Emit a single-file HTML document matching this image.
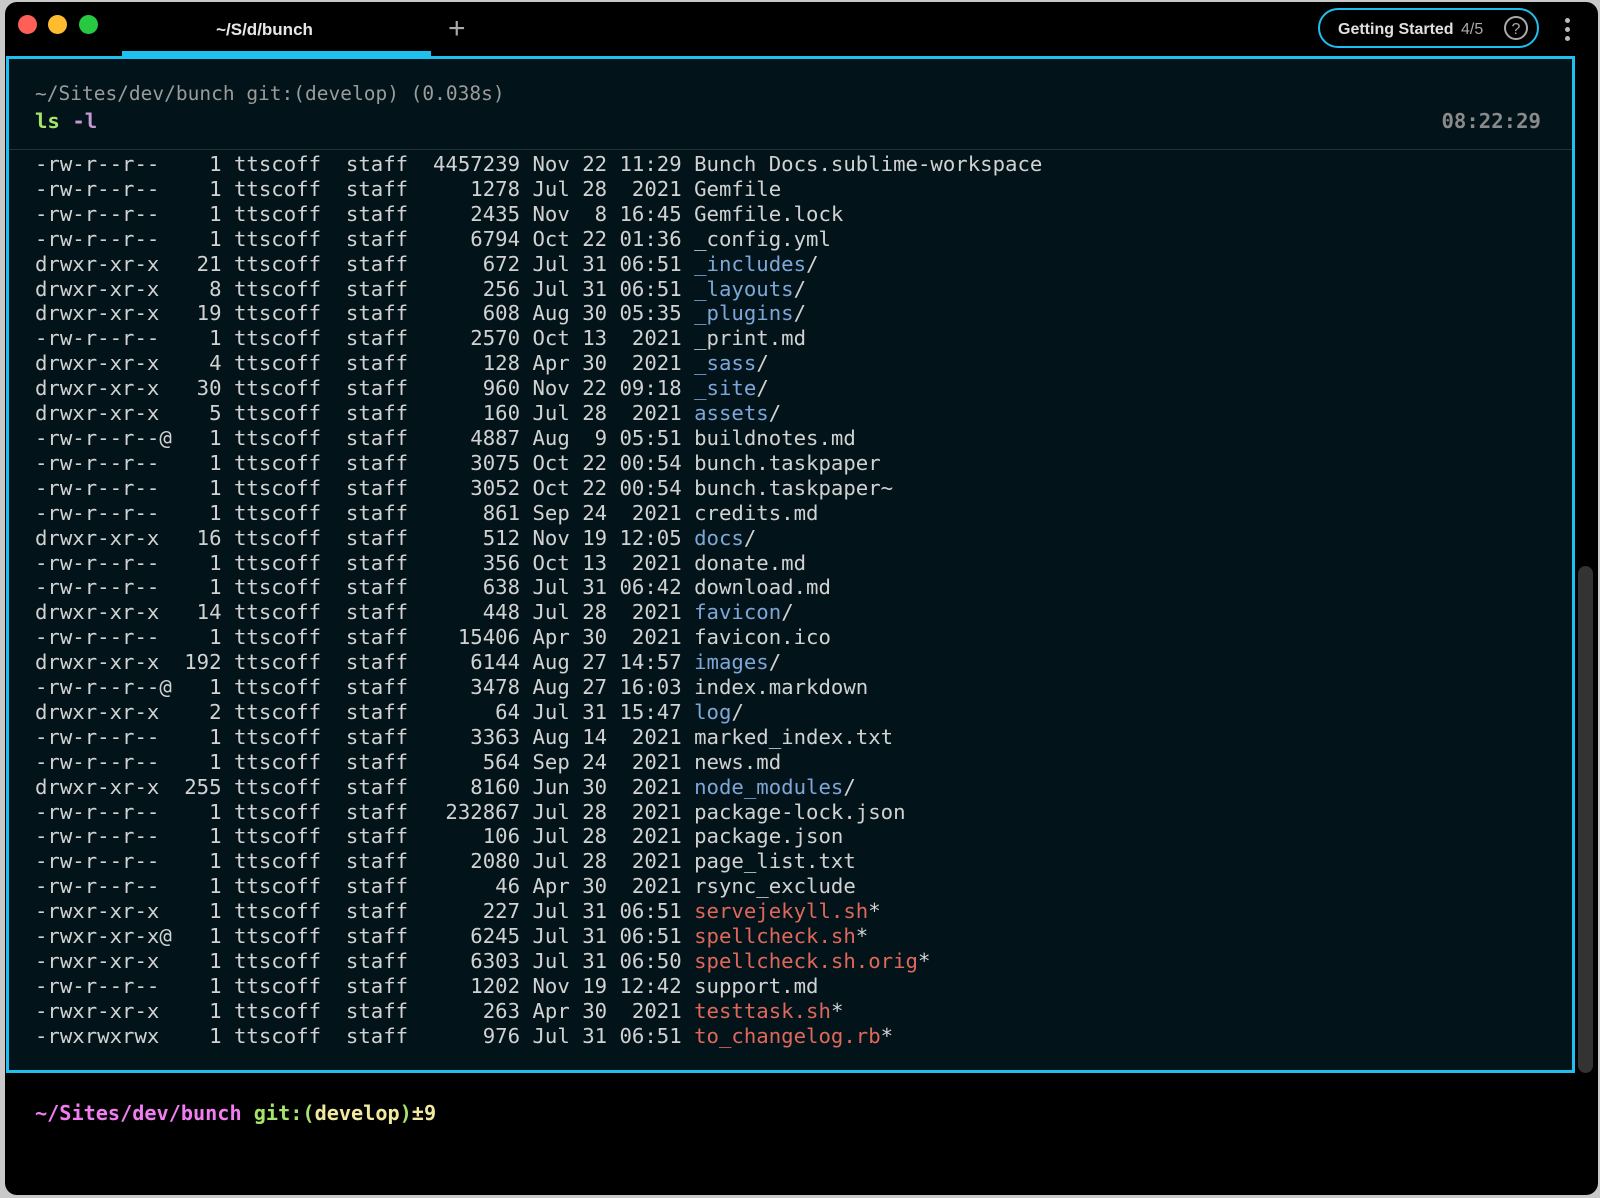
<!DOCTYPE html>
<html><head><meta charset="utf-8"><style>
html,body{margin:0;padding:0;width:1600px;height:1198px;overflow:hidden;background:#c9c9c9;}
.win{position:absolute;left:5px;top:2px;width:1593px;height:1193px;background:#000;border-radius:12px;overflow:hidden;}
.dot{position:absolute;top:13px;width:19px;height:19px;border-radius:50%;}
.tab{position:absolute;left:100px;top:0;width:319px;height:50px;color:#e8e8e8;font:bold 17px "Liberation Sans",sans-serif;text-align:center;line-height:56px;}
.tabline{position:absolute;left:117px;top:49px;width:309px;height:6px;background:#1ec0f0;}
.plus{position:absolute;left:443px;top:10px;color:#aaa;font:30px "Liberation Sans",sans-serif;}
.gs{position:absolute;left:1313px;top:6px;width:221px;height:40px;border:2px solid #1ec0f0;border-radius:21px;box-sizing:border-box;color:#e0e0e0;font:bold 16px "Liberation Sans",sans-serif;}
.gs .t{position:absolute;left:18px;top:11px;}
.gs .n{position:absolute;left:141px;top:11px;color:#aaa;font-weight:normal;}
.gs .q{position:absolute;left:184px;top:6px;width:24px;height:24px;border:2px solid #aaa;border-radius:50%;color:#aaa;text-align:center;line-height:23px;font-size:16px;font-weight:normal;box-sizing:border-box;}
.menu{position:absolute;left:1560px;top:16px;}
.menu i{display:block;width:5px;height:5px;border-radius:50%;background:#bbb;margin-bottom:4px;}
.box{position:absolute;left:1px;top:54px;width:1569px;height:1017px;border:3px solid #1ec0f0;box-sizing:border-box;background:#02141a;}
.mono{font-family:"DejaVu Sans Mono","Liberation Mono",monospace;font-size:20.66px;white-space:pre;}
.h1{position:absolute;left:26px;top:23px;color:#9b9b9b;font-size:19.5px;}
.h2{position:absolute;left:26px;top:50px;font-weight:bold;color:#a6e36a;}
.time{position:absolute;right:31px;top:50px;color:#8a8a8a;font-weight:bold;}
.sep{position:absolute;left:0;right:0;top:90px;height:1px;background:#24333a;}
.list{position:absolute;left:26px;top:93px;line-height:24.9px;color:#d2d2d2;margin:0;}
.d{color:#7ea7d8}.x{color:#e0675a}
.sb{position:absolute;left:1573px;top:564px;width:15px;height:507px;border-radius:8px;background:#333;}
.prompt{position:absolute;left:30px;top:1099px;font-weight:bold;font-size:20.2px;}
</style></head><body>
<div class="win">
<div class="dot" style="left:13px;background:#fe5f57"></div>
<div class="dot" style="left:43px;background:#febc2e"></div>
<div class="dot" style="left:74px;background:#28c840"></div>
<div class="tab">~/S/d/bunch</div>
<div class="tabline"></div>
<div class="plus">+</div>
<div class="gs"><span class="t">Getting Started</span><span class="n">4/5</span><span class="q">?</span></div>
<div class="menu"><i></i><i></i><i></i></div>
<div class="box">
<div class="mono h1">~/Sites/dev/bunch git:(develop) (0.038s)</div>
<div class="mono h2">ls <span style="color:#c49ad6">-l</span></div>
<div class="mono time">08:22:29</div>
<div class="sep"></div>
<pre class="mono list">-rw-r--r--    1 ttscoff  staff  4457239 Nov 22 11:29 Bunch Docs.sublime-workspace
-rw-r--r--    1 ttscoff  staff     1278 Jul 28  2021 Gemfile
-rw-r--r--    1 ttscoff  staff     2435 Nov  8 16:45 Gemfile.lock
-rw-r--r--    1 ttscoff  staff     6794 Oct 22 01:36 _config.yml
drwxr-xr-x   21 ttscoff  staff      672 Jul 31 06:51 <span class="d">_includes</span>/
drwxr-xr-x    8 ttscoff  staff      256 Jul 31 06:51 <span class="d">_layouts</span>/
drwxr-xr-x   19 ttscoff  staff      608 Aug 30 05:35 <span class="d">_plugins</span>/
-rw-r--r--    1 ttscoff  staff     2570 Oct 13  2021 _print.md
drwxr-xr-x    4 ttscoff  staff      128 Apr 30  2021 <span class="d">_sass</span>/
drwxr-xr-x   30 ttscoff  staff      960 Nov 22 09:18 <span class="d">_site</span>/
drwxr-xr-x    5 ttscoff  staff      160 Jul 28  2021 <span class="d">assets</span>/
-rw-r--r--@   1 ttscoff  staff     4887 Aug  9 05:51 buildnotes.md
-rw-r--r--    1 ttscoff  staff     3075 Oct 22 00:54 bunch.taskpaper
-rw-r--r--    1 ttscoff  staff     3052 Oct 22 00:54 bunch.taskpaper~
-rw-r--r--    1 ttscoff  staff      861 Sep 24  2021 credits.md
drwxr-xr-x   16 ttscoff  staff      512 Nov 19 12:05 <span class="d">docs</span>/
-rw-r--r--    1 ttscoff  staff      356 Oct 13  2021 donate.md
-rw-r--r--    1 ttscoff  staff      638 Jul 31 06:42 download.md
drwxr-xr-x   14 ttscoff  staff      448 Jul 28  2021 <span class="d">favicon</span>/
-rw-r--r--    1 ttscoff  staff    15406 Apr 30  2021 favicon.ico
drwxr-xr-x  192 ttscoff  staff     6144 Aug 27 14:57 <span class="d">images</span>/
-rw-r--r--@   1 ttscoff  staff     3478 Aug 27 16:03 index.markdown
drwxr-xr-x    2 ttscoff  staff       64 Jul 31 15:47 <span class="d">log</span>/
-rw-r--r--    1 ttscoff  staff     3363 Aug 14  2021 marked_index.txt
-rw-r--r--    1 ttscoff  staff      564 Sep 24  2021 news.md
drwxr-xr-x  255 ttscoff  staff     8160 Jun 30  2021 <span class="d">node_modules</span>/
-rw-r--r--    1 ttscoff  staff   232867 Jul 28  2021 package-lock.json
-rw-r--r--    1 ttscoff  staff      106 Jul 28  2021 package.json
-rw-r--r--    1 ttscoff  staff     2080 Jul 28  2021 page_list.txt
-rw-r--r--    1 ttscoff  staff       46 Apr 30  2021 rsync_exclude
-rwxr-xr-x    1 ttscoff  staff      227 Jul 31 06:51 <span class="x">servejekyll.sh</span>*
-rwxr-xr-x@   1 ttscoff  staff     6245 Jul 31 06:51 <span class="x">spellcheck.sh</span>*
-rwxr-xr-x    1 ttscoff  staff     6303 Jul 31 06:50 <span class="x">spellcheck.sh.orig</span>*
-rw-r--r--    1 ttscoff  staff     1202 Nov 19 12:42 support.md
-rwxr-xr-x    1 ttscoff  staff      263 Apr 30  2021 <span class="x">testtask.sh</span>*
-rwxrwxrwx    1 ttscoff  staff      976 Jul 31 06:51 <span class="x">to_changelog.rb</span>*</pre>
</div>
<div class="sb"></div>
<div class="mono prompt"><span style="color:#f07ef0">~/Sites/dev/bunch</span> <span style="color:#a6e36a">git:(</span><span style="color:#f2e9a0">develop</span><span style="color:#a6e36a">)</span><span style="color:#f2e9a0">±9</span></div>
</div>
</body></html>
